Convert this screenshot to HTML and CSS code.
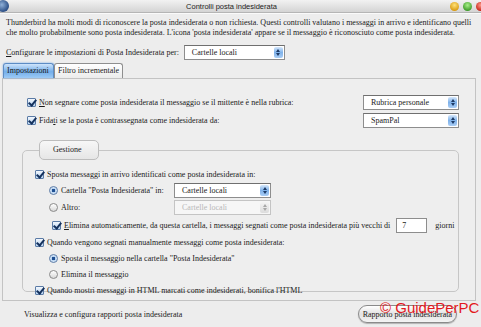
FILE: index.html
```html
<!DOCTYPE html>
<html>
<head>
  <meta charset="utf-8">
  <title>Controlli posta indesiderata</title>
  <link rel="stylesheet" href="styles.css">
</head>
<body>
  <div class="window">
    <div class="titlebar">
      <span class="app-icon"></span>
      <span class="title">Controlli posta indesiderata</span>
      <span class="lights">
        <i class="light yellow"></i>
        <i class="light green"></i>
        <i class="light red"></i>
      </span>
    </div>

    <p class="intro">Thunderbird ha molti modi di riconoscere la posta indesiderata o non richiesta. Questi controlli valutano i messaggi in arrivo e identificano quelli<br>che molto probabilmente sono posta indesiderata. L'icona 'posta indesiderata' appare se il messaggio è riconosciuto come posta indesiderata.</p>

    <div class="config-row">
      <span class="lbl"><u>C</u>onfigurare le impostazioni di Posta Indesiderata per:</span>
      <div class="select config-select"><span>Cartelle locali</span><b class="spin"></b></div>
    </div>

    <div class="tabs">
      <div class="tab active">Impostazioni</div>
      <div class="tab">Filtro incrementale</div>
    </div>

    <div class="panel">
      <div class="row">
        <span class="check"></span>
        <span class="lbl"><u>N</u>on segnare come posta indesiderata il messaggio se il mittente è nella rubrica:</span>
        <div class="select side-select"><span>Rubrica personale</span><b class="spin"></b></div>
      </div>
      <div class="row">
        <span class="check"></span>
        <span class="lbl">Fida<u>t</u>i se la posta è contrassegnata come indesiderata da:</span>
        <div class="select side-select"><span>SpamPal</span><b class="spin"></b></div>
      </div>

      <fieldset class="group">
        <legend>Gestione</legend>
        <div class="grow">
          <span class="check"></span>
          <span class="lbl">Sposta messaggi in arrivo identificati come posta indesiderata in:</span>
        </div>
        <div class="grow sub tall">
          <span class="radio on"></span>
          <span class="lbl radio-lbl">Cartella "Posta Indesiderata" in:</span>
          <div class="select folder-select"><span>Cartelle locali</span><b class="spin"></b></div>
        </div>
        <div class="grow sub tall">
          <span class="radio"></span>
          <span class="lbl radio-lbl">Altro:</span>
          <div class="select folder-select disabled"><span>Cartelle locali</span><b class="spin"></b></div>
        </div>
        <div class="grow sub2 taller">
          <span class="check"></span>
          <span class="lbl"><u>E</u>limina automaticamente, da questa cartella, i messaggi segnati come posta indesiderata più vecchi di</span>
          <span class="days">7</span>
          <span class="lbl">giorni</span>
        </div>
        <div class="grow">
          <span class="check"></span>
          <span class="lbl">Quando vengono segnati manualmente messaggi come posta indesiderata:</span>
        </div>
        <div class="grow sub">
          <span class="radio on"></span>
          <span class="lbl">Sposta il messaggio nella cartella "Posta Indesiderata"</span>
        </div>
        <div class="grow sub">
          <span class="radio"></span>
          <span class="lbl">Elimina il messaggio</span>
        </div>
        <div class="grow">
          <span class="check"></span>
          <span class="lbl">Quando mostri messaggi in HTML marcati come indesiderati, bonifica l'HTML</span>
        </div>
      </fieldset>
    </div>

    <div class="footer">
      <span class="lbl">Visualizza e configura rapporti posta indesiderata</span>
      <button class="report-btn">Rapporto posta indesiderata</button>
    </div>

    <div class="watermark">© GuidePerPC</div>
  </div>
</body>
</html>
```

FILE: styles.css
```css
body {
  margin: 0;
  padding: 0;
  background: #ececec;
}

.window {
  position: relative;
  width: 481px;
  height: 327px;
  overflow: hidden;
  background: #ededed;
  font-family: "Liberation Serif", "DejaVu Serif", serif;
  font-size: 8px;
  color: #1a1a1a;
}

/* Barra del titolo */
.titlebar {
  height: 12px;
  display: flex;
  align-items: center;
  background: linear-gradient(#f2f2f2, #d4d4d4);
  border-bottom: 1px solid #b5b5b5;
  box-shadow: 0 1px 0 #fafafa;
}

.app-icon {
  width: 12px;
  height: 12px;
  margin-left: -3px;
  border-radius: 50%;
  background: radial-gradient(circle at 40% 40%, #8fb0d8, #2c4f86 70%);
}

.title {
  flex: 1;
  text-align: center;
  padding-left: 4px;
  font-family: "Liberation Sans", "DejaVu Sans", sans-serif;
  font-size: 7.5px;
  color: #222;
}

.lights {
  display: flex;
  gap: 4px;
  margin-right: -4px;
}

.light {
  display: block;
  width: 9px;
  height: 9px;
  border-radius: 50%;
}

.yellow { background: radial-gradient(circle at 50% 35%, #ffe27a, #d99a10 75%); }
.green { background: radial-gradient(circle at 50% 35%, #a8f08a, #3c9a28 75%); }
.red { background: radial-gradient(circle at 50% 35%, #ff9a8a, #c8281c 75%); }

/* Testo introduttivo */
.intro {
  margin: 5px 0 0 6px;
  line-height: 10px;
  white-space: nowrap;
}

.config-row {
  display: flex;
  align-items: center;
  margin: 7px 0 0 6px;
  height: 15px;
}

.lbl {
  white-space: nowrap;
}

/* Select stile Aqua */
.select {
  display: flex;
  align-items: center;
  height: 15px;
  box-sizing: border-box;
  background: #fff;
  border: 1px solid #8d8d8d;
  border-top-color: #6f6f6f;
}

.select span {
  flex: 1;
  padding-left: 7px;
}

.spin {
  width: 9px;
  height: 11px;
  margin-right: 1px;
  border-radius: 2px;
  background: linear-gradient(#d5e7fb, #7fb2ea 50%, #a9cdf5);
  display: flex;
  flex-direction: column;
  align-items: center;
  justify-content: center;
  gap: 1px;
}

.spin::before,
.spin::after {
  content: "";
  width: 0;
  height: 0;
  border-left: 2px solid transparent;
  border-right: 2px solid transparent;
}

.spin::before { border-bottom: 3px solid #1c3a66; }
.spin::after { border-top: 3px solid #1c3a66; }

.select.disabled {
  border-color: #c4c4c4;
  background: #f6f6f6;
  color: #b8b8b8;
}

.select.disabled .spin {
  background: linear-gradient(#f4f4f4, #dcdcdc);
}

.select.disabled .spin::before { border-bottom-color: #a8a8a8; }
.select.disabled .spin::after { border-top-color: #a8a8a8; }

.config-select {
  width: 101px;
  margin-left: 5px;
}

.side-select {
  width: 96px;
  margin-left: auto;
}

.folder-select {
  width: 97px;
}

/* Linguette */
.tabs {
  display: flex;
  margin: 3px 0 0 3px;
  height: 15px;
}

.tab {
  box-sizing: border-box;
  height: 15px;
  padding: 0 3px;
  line-height: 13px;
  border: 1px solid #8f8f8f;
  border-bottom: none;
  border-radius: 3px 3px 0 0;
  background: linear-gradient(#ffffff, #ececec);
}

.tab.active {
  width: 51px;
  background: linear-gradient(#cfe4fb, #73aeea 55%, #9ccaf6);
  border-color: #5d8cc4;
  box-shadow: 0 0 2px #6aa4e6;
}

/* Pannello */
.panel {
  box-sizing: border-box;
  height: 223px;
  margin: 0 5px 0 2px;
  padding: 16px 16px 0 19px;
  border: 1px solid #c3c3c3;
  background: #eeeeee;
}

.row {
  display: flex;
  align-items: center;
  height: 15px;
  padding-left: 5px;
  margin-bottom: 3px;
}

.check {
  position: relative;
  flex: none;
  width: 9px;
  height: 9px;
  box-sizing: border-box;
  margin-right: 3px;
  border: 1px solid #5b7ba6;
  border-radius: 1px;
  background: linear-gradient(#f2f7fd, #b6d2f0);
}

.check::after {
  content: "";
  position: absolute;
  left: 2px;
  top: -1px;
  width: 3px;
  height: 6px;
  border-right: 2px solid #15325e;
  border-bottom: 2px solid #15325e;
  transform: rotate(40deg);
}

.radio {
  position: relative;
  flex: none;
  width: 9px;
  height: 9px;
  box-sizing: border-box;
  margin-right: 3px;
  border: 1px solid #8a8a8a;
  border-radius: 50%;
  background: linear-gradient(#ffffff, #d8d8d8);
}

.radio.on {
  border-color: #5b7ba6;
  background: radial-gradient(circle, #1f4f92 30%, #b6d2f0 40%, #eef5fd 90%);
}

.radio-lbl {
  width: 113px;
}

/* Gruppo Gestione */
.group {
  margin: 12px 0 0 0;
  padding: 6px 0 0 12px;
  border: 1px solid #c6c6c6;
  border-radius: 5px;
  min-width: 0;
  height: 152px;
  box-sizing: border-box;
}

.group legend {
  box-sizing: border-box;
  width: 60px;
  height: 20px;
  margin-left: 4px;
  padding: 0 0 0 13px;
  text-align: left;
  line-height: 18px;
  border: 1px solid #bdbdbd;
  border-radius: 5px;
  background: linear-gradient(#f7f7f7, #e6e6e6);
}

.grow {
  display: flex;
  align-items: center;
  height: 16px;
}

.grow.tall { height: 17px; }
.grow.taller { height: 18px; }

.grow.sub { padding-left: 14px; }
.grow.sub2 { padding-left: 17px; }

.days {
  box-sizing: border-box;
  width: 31px;
  height: 15px;
  margin: 0 8px 0 6px;
  padding-left: 5px;
  line-height: 13px;
  background: #fff;
  border: 1px solid #8d8d8d;
}

/* Piede */
.footer {
  display: flex;
  align-items: center;
  height: 26px;
  padding: 0 24px 0 24px;
}

.report-btn {
  margin-left: auto;
  height: 18px;
  padding: 0 4px;
  font-family: "Liberation Serif", "DejaVu Serif", serif;
  font-size: 8px;
  color: #1a1a1a;
  border: 1px solid #8a8a8a;
  border-radius: 9px;
  background: linear-gradient(#ffffff, #e2e2e2 50%, #f4f4f4);
  box-shadow: 0 1px 1px rgba(0, 0, 0, 0.25);
}

.watermark {
  position: absolute;
  left: 380px;
  top: 299px;
  font-family: "Liberation Sans", "DejaVu Sans", sans-serif;
  font-size: 15px;
  color: #e3191e;
  white-space: nowrap;
}
```
